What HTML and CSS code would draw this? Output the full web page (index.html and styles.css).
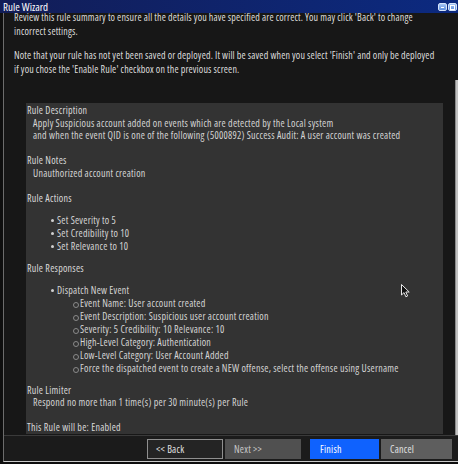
FILE: index.html
```html
<!DOCTYPE html>
<html lang="en">
<head>
    <meta charset="UTF-8">
    <meta name="viewport" content="width=device-width, initial-scale=1.0">
    <title>Rule Wizard</title>
    <link rel="stylesheet" href="styles.css">
</head>
<body>
    <div class="window">
        <div class="titlebar">
            <span>Rule Wizard</span>
            <div class="controls">
                <i class="min"></i>
                <i class="max"></i>
            </div>
        </div>

        <div class="frame">
            <div class="main">
                <div class="scroll">
                    <p class="intro">Review this rule summary to ensure all the details you have specified are correct. You may click 'Back' to change<br>incorrect settings.</p>
                    <p class="intro">Note that your rule has not yet been saved or deployed. It will be saved when you select 'Finish' and only be deployed<br>if you chose the 'Enable Rule' checkbox on the previous screen.</p>

                    <div class="summary">
                        <div class="section">
                            <h4>Rule Description</h4>
                            <p>Apply Suspicious account added on events which are detected by the Local system</p>
                            <p>and when the event QID is one of the following (5000892) Success Audit: A user account was created</p>
                        </div>

                        <div class="section">
                            <h4>Rule Notes</h4>
                            <p>Unauthorized account creation</p>
                        </div>

                        <div class="section list">
                            <h4>Rule Actions</h4>
                            <ul>
                                <li>Set Severity to 5</li>
                                <li>Set Credibility to 10</li>
                                <li>Set Relevance to 10</li>
                            </ul>
                        </div>

                        <div class="section list">
                            <h4>Rule Responses</h4>
                            <ul>
                                <li>Dispatch New Event
                                    <ul>
                                        <li>Event Name: User account created</li>
                                        <li>Event Description: Suspicious user account creation</li>
                                        <li>Severity: 5 Credibility: 10 Relevance: 10</li>
                                        <li>High-Level Category: Authentication</li>
                                        <li>Low-Level Category: User Account Added</li>
                                        <li>Force the dispatched event to create a NEW offense, select the offense using Username</li>
                                    </ul>
                                </li>
                            </ul>
                        </div>

                        <div class="section">
                            <h4>Rule Limiter</h4>
                            <p>Respond no more than 1 time(s) per 30 minute(s) per Rule</p>
                        </div>

                        <h4>This Rule will be: Enabled</h4>
                    </div>
                </div>

                <div class="track"><div class="thumb"></div></div>
            </div>

            <div class="footer">
                <button class="btn back">&lt;&lt; Back</button>
                <button class="btn next">Next &gt;&gt;</button>
                <button class="btn finish">Finish</button>
                <button class="btn cancel">Cancel</button>
            </div>
        </div>

        <!-- mouse pointer resting over the summary -->
        <svg class="pointer" width="10" height="14" viewBox="0 0 10 14">
            <path d="M0.5 0.5 L0.5 11 L3 8.6 L4.9 12.8 L6.6 12 L4.8 8 L8.2 8 Z" fill="#111" stroke="#e8e8e8" stroke-width="1"/>
        </svg>
    </div>
</body>
</html>
```

FILE: styles.css
```css
:root {
    --font: "Open Sans", "Roboto", sans-serif;
    --panel: #333333;
    --bg: #171717;
    --text: #d4d4d4;
}

* {
    box-sizing: border-box;
    margin: 0;
    padding: 0;
}

body {
    background: #0e0e0e;
    font-family: var(--font);
    font-stretch: 75%;
    letter-spacing: 0.25px;
}

.window {
    position: relative;
    width: 458px;
    height: 464px;
    display: flex;
    flex-direction: column;
    background: #0e0e0e;
    overflow: hidden;
}

/* title bar */
.titlebar {
    height: 13px;
    flex: none;
    display: flex;
    align-items: center;
    justify-content: space-between;
    padding: 0 1px 0 3px;
    background: linear-gradient(to right, #121d57, #0c2a80);
    color: #fff;
    font-size: 11px;
    letter-spacing: 0;
    line-height: 13px;
    position: relative;
    z-index: 2;
}

.controls {
    display: flex;
    gap: 1px;
}

.controls i {
    display: block;
    width: 9px;
    height: 8px;
    border-radius: 2px;
    border: 1px solid #d6e4fa;
    background: linear-gradient(#a6c6f4, #5e8fdf);
    position: relative;
}

.controls .min::after {
    content: "";
    position: absolute;
    left: 2px;
    top: 3px;
    width: 3px;
    height: 1px;
    background: #fff;
}

.controls .max::after {
    content: "";
    position: absolute;
    left: 1px;
    top: 1px;
    width: 3px;
    height: 3px;
    border: 1px solid #fff;
}

/* dialog body */
.frame {
    flex: 1;
    display: flex;
    flex-direction: column;
    margin: 0 0 2px 3px;
    border-left: 1px solid #6c6c6c;
    border-bottom: 1px solid #c9c9c9;
    background: var(--bg);
    min-height: 0;
}

.main {
    flex: 1;
    display: flex;
    min-height: 0;
    overflow: hidden;
}

.scroll {
    flex: 1;
    min-width: 0;
    padding-left: 10px;
    margin-top: -3px;
    color: #dcdcdc;
    font-size: 10px;
}

.intro {
    line-height: 14px;
    margin-bottom: 10px;
    padding-right: 8px;
    letter-spacing: 0.15px;
}

.track {
    width: 3px;
    flex: none;
}

.thumb {
    margin-top: 67px;
    height: 100%;
    background: #c2c2c2;
    border-left: 1px solid #8c8c8c;
}

/* rule summary panel */
.summary {
    margin: 27px 12px 0 12px;
    padding: 1px 0 0 1px;
    height: 331px;
    background: var(--panel);
    color: var(--text);
    font-size: 10px;
    line-height: 12.5px;
}

.summary h4 {
    font-weight: normal;
    color: #d8d8d8;
}

.summary p {
    padding-left: 6px;
}

.section {
    margin-bottom: 12.5px;
}

.section.list {
    margin-bottom: 0;
}

.summary ul {
    list-style: none;
    margin: 9.5px 0 9px;
    padding-left: 30px;
}

.summary li {
    line-height: 13px;
    position: relative;
}

.summary li::before {
    content: "";
    position: absolute;
    left: -6px;
    top: 5px;
    width: 3px;
    height: 3px;
    border-radius: 50%;
    background: #d0d0d0;
}

.summary ul ul {
    margin: 0;
    padding-left: 23px;
}

.summary ul ul li::before {
    left: -7px;
    top: 5px;
    width: 4px;
    height: 4px;
    background: none;
    border: 1px solid #8a8a8a;
}

/* button bar */
.footer {
    height: 26px;
    flex: none;
    display: flex;
    justify-content: flex-end;
    align-items: flex-start;
    padding: 3px 6px 0 0;
    border-top: 1px solid #3a3a3a;
    background: #1b1b1b;
}

.btn {
    height: 20px;
    width: 76px;
    padding-left: 9px;
    text-align: left;
    font-family: var(--font);
    font-stretch: 75%;
    letter-spacing: 0.25px;
    font-size: 10px;
    color: #e0e0e0;
    border: none;
    margin-left: 2px;
}

.back {
    background: #242424;
    border: 1px solid #8f8f8f;
    padding-left: 8px;
}

.next {
    background: #505050;
    color: #c8c8c8;
}

.finish {
    width: 69px;
    margin-left: 9px;
    background: #0f62fe;
    color: #fff;
    padding-left: 10px;
}

.cancel {
    width: 71px;
    background: #5e5e5e;
}

.pointer {
    position: absolute;
    left: 401px;
    top: 284px;
}
```
